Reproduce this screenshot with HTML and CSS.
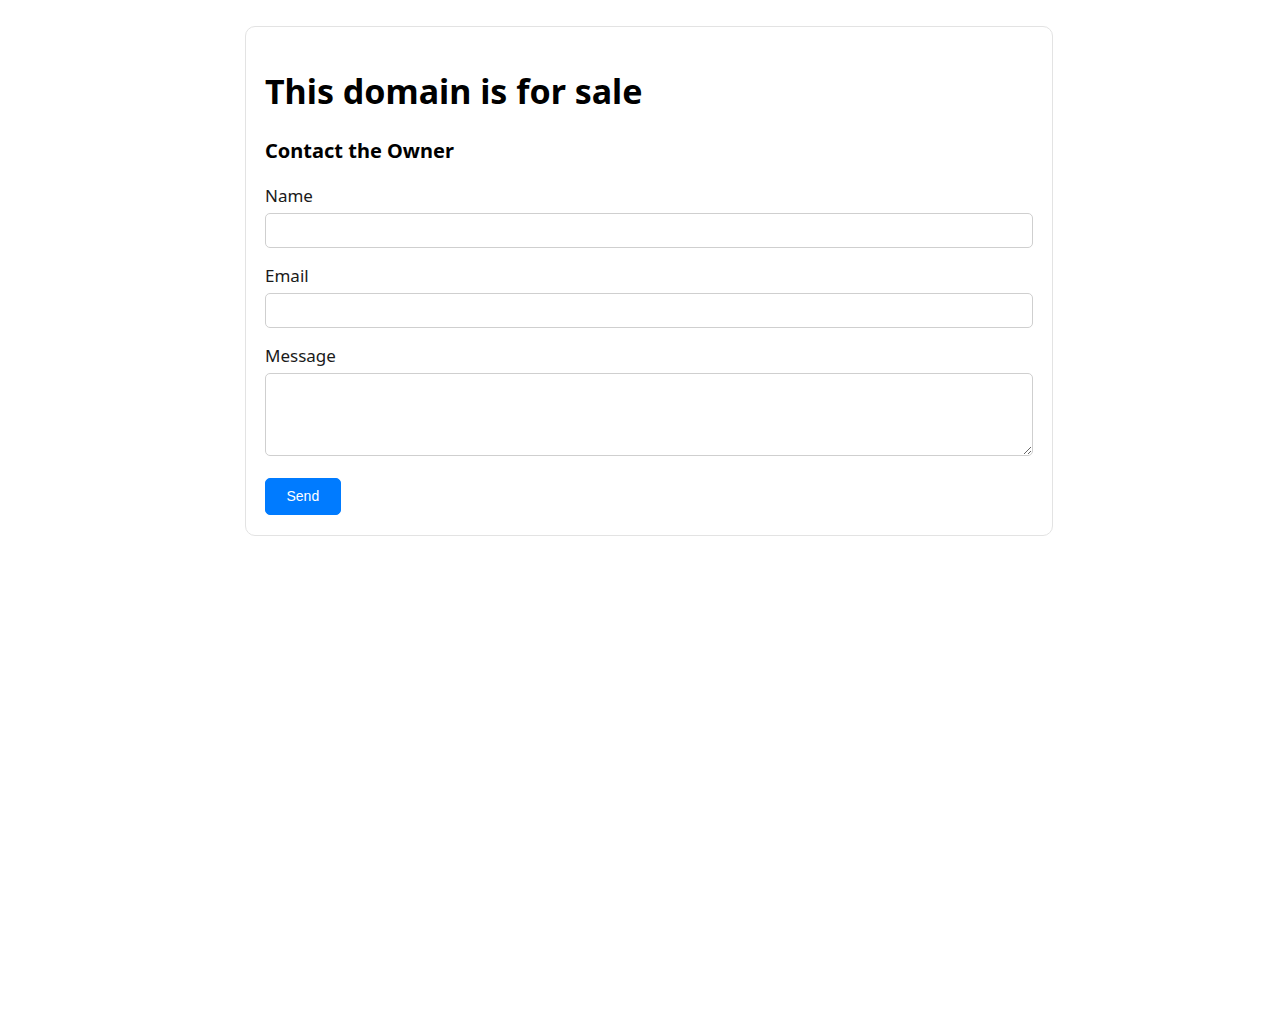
FILE: index.html
```html
<!DOCTYPE html>
<html lang="en">
<head>
<meta charset="utf-8">
<title>This domain is for sale</title>
<link rel="stylesheet" href="styles.css">
</head>
<body>
<main class="card">
  <h1 class="title">This domain is for sale</h1>
  <h3 class="subtitle">Contact the Owner</h3>
  <form class="form">
    <div class="field">
      <label class="label" for="name">Name</label>
      <input class="input" id="name" type="text">
    </div>
    <div class="field">
      <label class="label" for="email">Email</label>
      <input class="input" id="email" type="email">
    </div>
    <div class="field">
      <label class="label" for="message">Message</label>
      <textarea class="input textarea" id="message"></textarea>
    </div>
    <button class="button" type="button">Send</button>
  </form>
</main>
</body>
</html>
```

FILE: styles.css
```css
html, body {
  background: #ffffff;
}
body {
  margin: 0;
  padding: 26px 0 0 18px;
  font-family: "Noto Sans", "Open Sans", sans-serif;
  color: #000;
}
.card {
  box-sizing: border-box;
  width: 808px;
  margin: 0 auto;
  padding: 19px 19px 20px;
  border: 1px solid #e3e3e3;
  border-radius: 10px;
}
.title {
  margin: 22px 0 0;
  font-size: 34px;
  font-weight: 700;
  line-height: 46px;
}
.subtitle {
  margin: 23px 0 0;
  font-size: 20px;
  font-weight: 700;
  line-height: 27px;
}
.form {
  margin-top: 20px;
}
.field {
  margin-bottom: 16px;
}
.label {
  display: block;
  font-size: 17px;
  line-height: 23px;
  color: #1a1a1a;
  margin-bottom: 6px;
}
.input {
  display: block;
  box-sizing: border-box;
  width: 100%;
  height: 35px;
  margin: 0;
  padding: 8px;
  border: 1px solid #cfcfcf;
  border-radius: 5px;
  font-family: inherit;
  font-size: 14px;
  background: #fff;
}
.textarea {
  height: 83px;
  resize: vertical;
}
.button {
  display: block;
  margin-top: 22px;
  padding: 10px 20.5px;
  border: 1px solid #007bff;
  border-radius: 5px;
  background: #007bff;
  color: #fff;
  font-family: "Liberation Sans", Arial, sans-serif;
  font-size: 14px;
  line-height: 15px;
}
```
